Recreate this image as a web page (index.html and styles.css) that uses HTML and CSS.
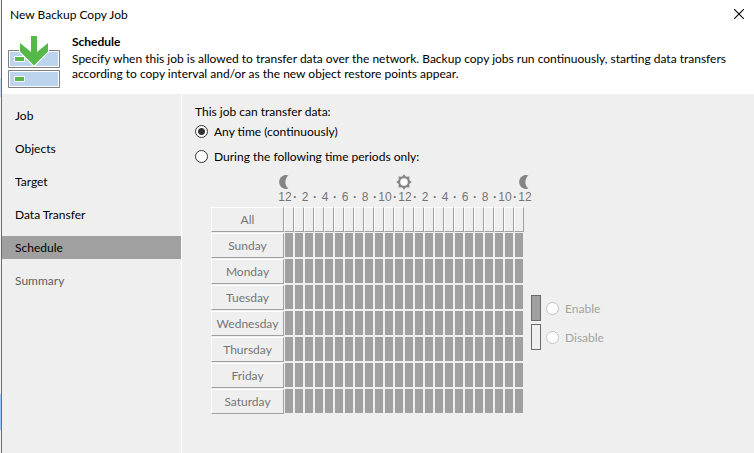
FILE: index.html
```html
<!DOCTYPE html>
<html lang="en">
<head>
<meta charset="utf-8">
<title>New Backup Copy Job</title>
<link rel="stylesheet" href="styles.css">
</head>
<body>
<div class="backdrop"></div>
<div class="dialog">
  <header class="titlebar">
    <span class="caption">New Backup Copy Job</span>
    <button class="close" type="button" aria-label="Close">
      <svg width="10" height="10" viewBox="0 0 10 10"><path d="M0 0L10 10M10 0L0 10" stroke="#000" stroke-width="1.1"/></svg>
    </button>
  </header>
  <section class="banner">
    <svg class="banner-icon" width="52" height="52" viewBox="0 0 52 52">
      <g fill="#bcd4ee" stroke="#808080"><path d="M.5 14.500h51v17H.5zM.5 34.500h51v17H.5z"/></g>
      <g fill="none" stroke="#fff"><path d="M1.500 15.500h49v15h-49zM1.500 35.500h49v15h-49z"/></g>
      <g fill="#54b948" stroke="#fff"><path d="M6.500 20.500h10v5h-10zM6.500 40.500h10v5h-10z"/></g>
      <path d="M23 0h6v16l11-9v8.500L26 29.500 12 15.500V7l11 9z" fill="#54b948" stroke="#fff" stroke-width="2" paint-order="stroke"/>
    </svg>
    <div class="banner-text">
      <h1>Schedule</h1>
      <p>Specify when this job is allowed to transfer data over the network. Backup copy jobs run continuously, starting data transfers according to copy interval and/or as the new object restore points appear.</p>
    </div>
  </section>
  <div class="body">
    <nav class="steps">
      <a href="#job">Job</a>
      <a href="#objects">Objects</a>
      <a href="#target">Target</a>
      <a href="#transfer">Data Transfer</a>
      <a href="#schedule" class="current" aria-current="step">Schedule</a>
      <a href="#summary" class="upcoming">Summary</a>
    </nav>
    <main class="content">
      <p class="prompt">This job can transfer data:</p>
      <label class="option"><input type="radio" name="when" checked>Any time (continuously)</label>
      <label class="option"><input type="radio" name="when">During the following time periods only:</label>
      <div class="schedule">
        <div class="planner">
          <div class="sky">
            <svg width="10" height="14" viewBox="0 0 10 14"><path d="M9.500.4A7 7 0 1 0 9.500 13.600 8.500 8.500 0 0 1 9.500.4z" fill="#858585"/></svg>
            <svg width="16" height="16" viewBox="0 0 16 16"><path d="M8 .3l2 2.400 3.400-.1-.1 3.400L15.700 8l-2.400 2 .1 3.400-3.400-.1L8 15.700l-2-2.400-3.400.1.1-3.400L.3 8l2.400-2-.1-3.400 3.400.1z" fill="#858585"/><circle cx="8" cy="8" r="3.800" fill="#fff"/></svg>
            <svg width="10" height="14" viewBox="0 0 10 14"><path d="M9.500.4A7 7 0 1 0 9.500 13.600 8.500 8.500 0 0 1 9.500.4z" fill="#858585"/></svg>
          </div>
          <div class="scale" id="scale"></div>
          <table class="grid"><tbody id="grid"></tbody></table>
        </div>
        <div class="legend">
          <label><span class="swatch on"></span><input type="radio" name="state" disabled>Enable</label>
          <label><span class="swatch"></span><input type="radio" name="state" disabled>Disable</label>
        </div>
      </div>
    </main>
  </div>
</div>
<script src="script.js"></script>
</body>
</html>
```
FILE: styles.css
```css
* { box-sizing: border-box; }
body {
  margin: 0;
  min-height: 100vh;
  display: flex;
  background: #efefef;
  color: #000;
  font: 12px/15px Lato, "Open Sans", sans-serif;
}
h1, p { margin: 0; font-size: inherit; }
button { font: inherit; color: inherit; padding: 0; border: 0; background: none; }
svg { display: block; }

.backdrop {
  width: 1px;
  background: linear-gradient(#f4f4f4 78px, #c5dcf5 78px 97px, #f4f4f4 97px 394px, #99c9ff 394px 430px, #f4f4f4 430px);
}
.dialog {
  flex: 1;
  display: flex;
  flex-direction: column;
  border-left: 1px solid #6b6b6b;
}
.titlebar {
  display: flex;
  justify-content: space-between;
  align-items: center;
  height: 28px;
  padding: 0 10px 0 8px;
  background: #fff;
}
.close { width: 10px; height: 10px; }
.banner {
  display: flex;
  gap: 12px;
  padding: 6px 20px 5px 6px;
  background: #fff;
}
.banner-icon { flex: none; margin-top: 2px; overflow: visible; }
.banner-text { height: 55px; }
.banner-text h1 { margin-bottom: 2px; }

.body { flex: 1; display: flex; }
.steps {
  width: 180px;
  flex: none;
  display: flex;
  flex-direction: column;
  gap: 10px;
  padding-top: 10px;
  border-right: 1px solid #fff;
}
.steps a {
  padding: 4px 13px;
  color: #000;
  text-decoration: none;
}
.steps .current { background: #a0a0a0; }
.steps .upcoming { color: #606060; }

.content { flex: 1; padding: 10px 13px; }
.option {
  display: flex;
  align-items: center;
  gap: 6px;
  width: max-content;
  height: 25px;
}
input[type="radio"] {
  appearance: none;
  flex: none;
  width: 13px;
  height: 13px;
  margin: 0;
  border: 1px solid #333;
  border-radius: 50%;
  background: #fff;
}
input[type="radio"]:checked { background: radial-gradient(circle, #333 3px, #fff 4px); }
input[type="radio"]:disabled { border-color: #c3c3c3; }

.schedule { display: flex; gap: 2px; padding: 5px 0 0 16px; }
.sky {
  display: flex;
  justify-content: space-between;
  align-items: center;
  height: 16px;
  padding-left: 68px;
}
.scale {
  display: flex;
  height: 16px;
  padding-left: 69px;
  color: #757575;
  font: 12px/14px "Liberation Sans", sans-serif;
}
.scale span {
  display: flex;
  justify-content: center;
  flex: none;
  width: 10px;
}
.scale .odd { font-weight: bold; }
.planner { width: 318px; }
.grid { border-collapse: separate; border-spacing: 0; table-layout: fixed; width: 313px; }
.grid th, .grid td { height: 26px; padding: 1px 0 0; }
.grid th { width: 73px; font-weight: normal; }
.grid button {
  display: block;
  width: 100%;
  height: 25px;
  border: 1px solid;
  border-color: #fff #a0a0a0 #a0a0a0 #fff;
  color: #757575;
}
.grid td { width: 10px; }
.grid .slot { padding: 1px; }
.grid .slot span { display: block; height: 24px; background: #a0a0a0; }

.legend { padding-top: 121px; color: #a3a3a3; }
.legend label {
  display: flex;
  align-items: center;
  height: 26px;
  margin-bottom: 3px;
}
.legend input { margin: 0 6px 0 5px; }
.swatch { width: 10px; height: 26px; border: 1px solid #6b6b6b; }
.swatch.on { background: #a0a0a0; }
```
FILE: script.js
```js
const days = ["All", "Sunday", "Monday", "Tuesday", "Wednesday", "Thursday", "Friday", "Saturday"];
const scale = document.getElementById("scale");
for (let hour = 0; hour <= 24; hour++) {
  const tick = document.createElement("span");
  tick.textContent = hour % 2 ? "·" : String(hour % 12 || 12);
  if (hour % 2) tick.className = "odd";
  scale.append(tick);
}
const grid = document.getElementById("grid");
days.forEach((day, index) => {
  const row = grid.insertRow();
  const head = document.createElement("th");
  head.scope = "row";
  const button = document.createElement("button");
  button.type = "button";
  button.textContent = day;
  head.append(button);
  row.append(head);
  for (let hour = 0; hour < 24; hour++) {
    const cell = row.insertCell();
    cell.className = index ? "slot" : "column";
    const part = document.createElement(index ? "span" : "button");
    if (!index) {
      part.type = "button";
      part.ariaLabel = `Hour ${hour}`;
    }
    cell.append(part);
  }
});
```
